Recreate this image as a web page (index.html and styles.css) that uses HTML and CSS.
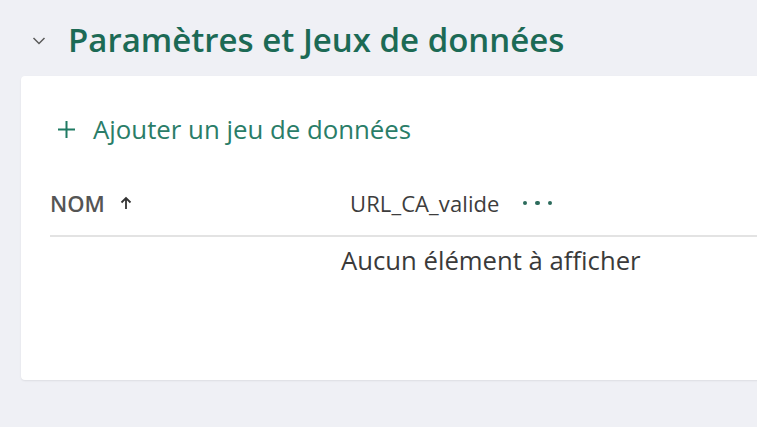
FILE: index.html
```html
<!DOCTYPE html>
<html lang="fr">
<head>
<meta charset="utf-8">
<link rel="stylesheet" href="styles.css">
</head>
<body>
<div class="page">
  <div class="section-header">
    <svg class="chevron" width="14" height="10" viewBox="0 0 14 10"><path d="M1.5 2 L7 7.5 L12.5 2" fill="none" stroke="#5a5a5a" stroke-width="1.5"/></svg>
    <h2 class="title">Paramètres et Jeux de données</h2>
  </div>
  <div class="card">
    <div class="add-btn">
      <svg class="plus" width="19" height="19" viewBox="0 0 19 19"><path d="M9.5 1 V18 M1 9.5 H18" stroke="#1f7a63" stroke-width="2" fill="none"/></svg>
      <span>Ajouter un jeu de données</span>
    </div>
    <div class="table">
      <div class="thead">
        <div class="col col-name">NOM
          <svg class="arrow" width="14" height="14" viewBox="0 0 14 14"><path d="M7 13 V2.5 M2.5 6.5 L7 2 L11.5 6.5" fill="none" stroke="#333" stroke-width="1.8"/></svg>
        </div>
        <div class="col col-url">URL_CA_valide
          <span class="dots"><i></i><i></i><i></i></span>
        </div>
      </div>
      <div class="empty">Aucun élément à afficher</div>
    </div>
  </div>
</div>
</body>
</html>
```
FILE: styles.css
```css
* { box-sizing: border-box; }
html, body { margin: 0; padding: 0; }
body {
  background: #eff0f5;
  font-family: "Open Sans", "Noto Sans", sans-serif;
  width: 757px;
  height: 427px;
  overflow: hidden;
}
.page {
  padding: 18px 0 0 21px;
}
.section-header {
  display: flex;
  align-items: center;
  height: 44px;
  padding-left: 11px;
}
.chevron { margin-right: 22px; margin-top: 2px; }
.title {
  margin: 0;
  font-size: 33px;
  line-height: 44px;
  font-weight: 600;
  color: #1c6a55;
  letter-spacing: 0;
}
.card {
  margin-top: 14px;
  background: #fff;
  border-radius: 4px 0 0 4px;
  width: 800px;
  height: 304px;
  box-shadow: 0 1px 2px rgba(0,0,0,0.08);
  padding: 35px 0 0 29px;
}
.add-btn {
  display: flex;
  align-items: center;
  gap: 17px;
  padding-left: 7px;
  color: #2a7d68;
  font-size: 25.8px;
  height: 36px;
}
.table {
  margin-top: 44px;
}
.thead {
  display: flex;
  align-items: center;
  height: 46px;
  padding-bottom: 20px;
  border-bottom: 2px solid #e3e3e3;
}
.col {
  display: flex;
  align-items: center;
  line-height: 26px;
  color: #3d3d3d;
}
.col-name {
  width: 300px;
  font-size: 22px;
  font-weight: 600;
  color: #555;
  gap: 14px;
}
.col-url { gap: 23px; font-size: 22px; letter-spacing: 0.1px; }
.dots { display: flex; gap: 8px; }
.dots i { width: 4.5px; height: 4.5px; border-radius: 50%; background: #2c6b5c; display: block; }
.empty {
  padding-left: 291px;
  padding-top: 9px;
  font-size: 25.7px;
  line-height: 30px;
  color: #3a3a3a;
}
```
